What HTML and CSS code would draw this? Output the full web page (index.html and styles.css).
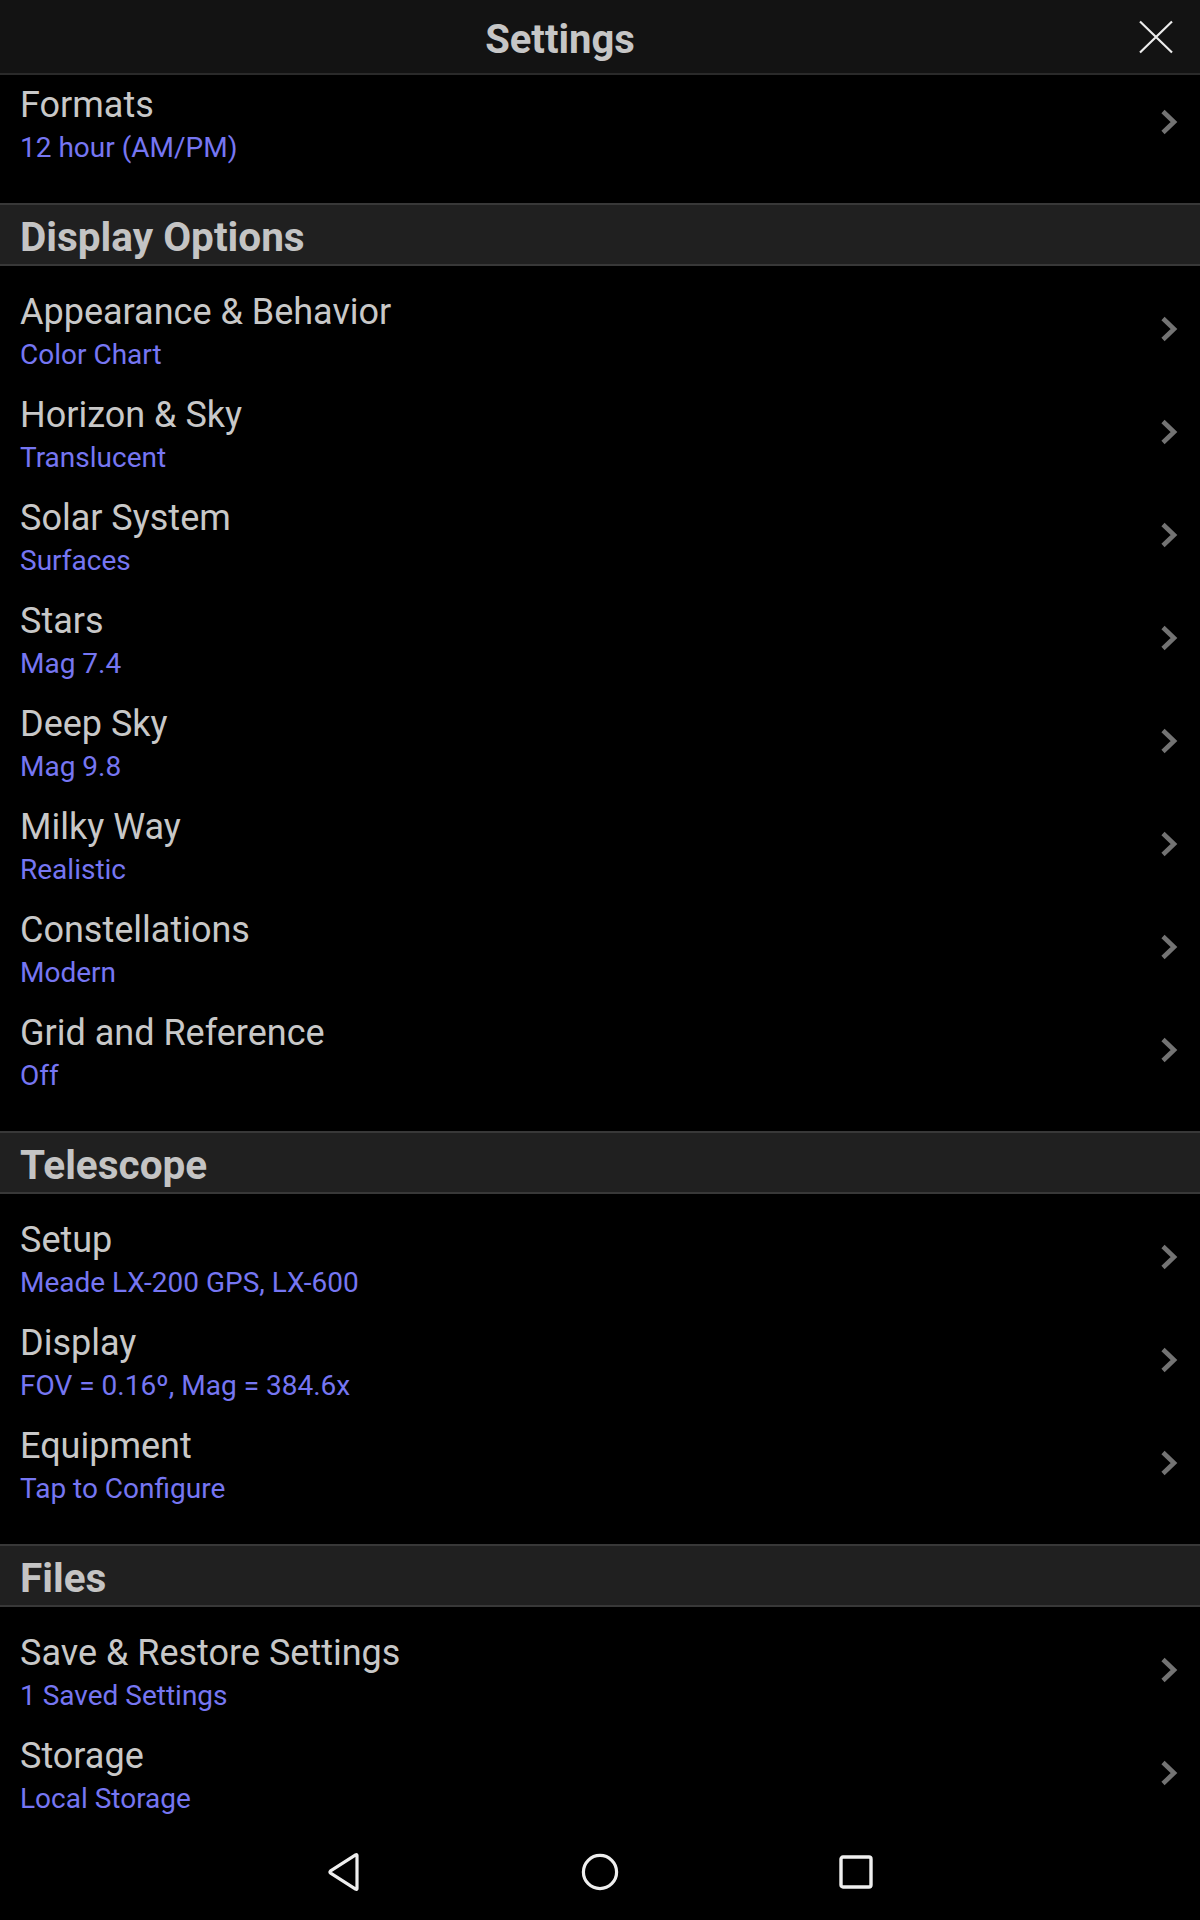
FILE: index.html
```html
<!DOCTYPE html>
<html lang="en">
<head>
<meta charset="utf-8">
<title>Settings</title>
<link rel="stylesheet" href="styles.css">
</head>
<body>
<div class="screen">
  <header class="topbar">
    <div class="topbar-title">Settings</div>
    <div class="topbar-close">
      <svg width="34" height="34" viewBox="0 0 34 34"><path d="M1 1.5 L33 32.5 M33 1.5 L1 32.5" stroke="#ececec" stroke-width="2.2" fill="none"/></svg>
    </div>
  </header>
  <main class="scroll">
    <section class="group">
      <div class="row"><div class="row-text"><div class="row-title">Formats</div><div class="row-sub">12 hour (AM/PM)</div></div><svg class="chev" viewBox="0 0 18 26"><polyline points="3,2.5 14,13 3,23.5" /></svg></div>
    </section>
    <div class="section-bar">Display Options</div>
    <section class="group">
      <div class="row"><div class="row-text"><div class="row-title">Appearance &amp; Behavior</div><div class="row-sub">Color Chart</div></div><svg class="chev" viewBox="0 0 18 26"><polyline points="3,2.5 14,13 3,23.5" /></svg></div>
      <div class="row"><div class="row-text"><div class="row-title">Horizon &amp; Sky</div><div class="row-sub">Translucent</div></div><svg class="chev" viewBox="0 0 18 26"><polyline points="3,2.5 14,13 3,23.5" /></svg></div>
      <div class="row"><div class="row-text"><div class="row-title">Solar System</div><div class="row-sub">Surfaces</div></div><svg class="chev" viewBox="0 0 18 26"><polyline points="3,2.5 14,13 3,23.5" /></svg></div>
      <div class="row"><div class="row-text"><div class="row-title">Stars</div><div class="row-sub">Mag 7.4</div></div><svg class="chev" viewBox="0 0 18 26"><polyline points="3,2.5 14,13 3,23.5" /></svg></div>
      <div class="row"><div class="row-text"><div class="row-title">Deep Sky</div><div class="row-sub">Mag 9.8</div></div><svg class="chev" viewBox="0 0 18 26"><polyline points="3,2.5 14,13 3,23.5" /></svg></div>
      <div class="row"><div class="row-text"><div class="row-title">Milky Way</div><div class="row-sub">Realistic</div></div><svg class="chev" viewBox="0 0 18 26"><polyline points="3,2.5 14,13 3,23.5" /></svg></div>
      <div class="row"><div class="row-text"><div class="row-title">Constellations</div><div class="row-sub">Modern</div></div><svg class="chev" viewBox="0 0 18 26"><polyline points="3,2.5 14,13 3,23.5" /></svg></div>
      <div class="row"><div class="row-text"><div class="row-title">Grid and Reference</div><div class="row-sub">Off</div></div><svg class="chev" viewBox="0 0 18 26"><polyline points="3,2.5 14,13 3,23.5" /></svg></div>
    </section>
    <div class="section-bar">Telescope</div>
    <section class="group">
      <div class="row"><div class="row-text"><div class="row-title">Setup</div><div class="row-sub">Meade LX-200 GPS, LX-600</div></div><svg class="chev" viewBox="0 0 18 26"><polyline points="3,2.5 14,13 3,23.5" /></svg></div>
      <div class="row"><div class="row-text"><div class="row-title">Display</div><div class="row-sub">FOV = 0.16º, Mag = 384.6x</div></div><svg class="chev" viewBox="0 0 18 26"><polyline points="3,2.5 14,13 3,23.5" /></svg></div>
      <div class="row"><div class="row-text"><div class="row-title">Equipment</div><div class="row-sub">Tap to Configure</div></div><svg class="chev" viewBox="0 0 18 26"><polyline points="3,2.5 14,13 3,23.5" /></svg></div>
    </section>
    <div class="section-bar">Files</div>
    <section class="group">
      <div class="row"><div class="row-text"><div class="row-title">Save &amp; Restore Settings</div><div class="row-sub">1 Saved Settings</div></div><svg class="chev" viewBox="0 0 18 26"><polyline points="3,2.5 14,13 3,23.5" /></svg></div>
      <div class="row"><div class="row-text"><div class="row-title">Storage</div><div class="row-sub">Local Storage</div></div><svg class="chev" viewBox="0 0 18 26"><polyline points="3,2.5 14,13 3,23.5" /></svg></div>
    </section>
  </main>
  <nav class="navbar">
    <svg class="nav-icon nav-back" width="34" height="40" viewBox="0 0 34 40"><path d="M30 3.5 L30 36.5 Q30 38 28.6 37.2 L3.6 21.2 Q2.4 20 3.6 18.8 L28.6 2.8 Q30 2 30 3.5 Z" fill="none" stroke="#efefef" stroke-width="3.2" stroke-linejoin="round"/></svg>
    <svg class="nav-icon nav-home" width="40" height="40" viewBox="0 0 40 40"><circle cx="20" cy="20" r="16.6" fill="none" stroke="#efefef" stroke-width="3.2"/></svg>
    <svg class="nav-icon" width="36" height="36" viewBox="0 0 36 36"><rect x="3" y="3" width="30" height="30" rx="2" fill="none" stroke="#efefef" stroke-width="3.4"/></svg>
  </nav>
</div>
</body>
</html>
```
FILE: styles.css
```css
* { box-sizing: border-box; }
html, body { margin: 0; padding: 0; background: #000; }
body { font-family: Roboto, "Noto Sans", "Liberation Sans", sans-serif; }
.screen {
  width: 1200px;
  height: 1920px;
  display: flex;
  flex-direction: column;
  background: #000;
  overflow: hidden;
}
.topbar {
  height: 75px;
  flex: none;
  display: flex;
  align-items: center;
  background: #131313;
  border-bottom: 2px solid #2a2a2a;
}
.topbar-title {
  flex: 1;
  text-align: center;
  color: #c6c6c6;
  font-weight: 700;
  font-size: 40px;
  line-height: 46px;
  margin-top: 6px;
}
.topbar-close {
  width: 80px;
  flex: none;
  display: flex;
  align-items: center;
  padding-left: 19px;
}
.topbar-close svg { display: block; }
.scroll {
  flex: 1;
  overflow: hidden;
}
.group {
  padding: 16px 0 25px;
}
.group:first-child { padding-top: 0; }
.row {
  height: 103px;
  display: flex;
  align-items: center;
  padding: 10px 22px 14px 20px;
}
.row-text {
  flex: 1;
  min-width: 0;
}
.row-title {
  color: #c8c8c8;
  font-size: 36px;
  line-height: 41px;
}
.row-sub {
  margin-top: 6px;
  color: #7676f2;
  font-size: 28px;
  line-height: 32px;
}
.chev {
  width: 18px;
  height: 26px;
  flex: none;
  margin-bottom: 5px;
  fill: none;
  stroke: #737373;
  stroke-width: 4.6;
}
.section-bar {
  height: 63px;
  background: #202020;
  border-top: 2px solid #383838;
  border-bottom: 2px solid #383838;
  padding: 7px 20px 0;
  color: #c4c4c4;
  font-weight: 700;
  font-size: 40.5px;
  line-height: 51px;
}
.navbar {
  height: 96px;
  flex: none;
  background: #000;
  display: flex;
  align-items: center;
  justify-content: center;
}
.nav-icon { display: block; }
.nav-back { margin-right: 219px; }
.nav-home { margin-right: 218px; }
```
